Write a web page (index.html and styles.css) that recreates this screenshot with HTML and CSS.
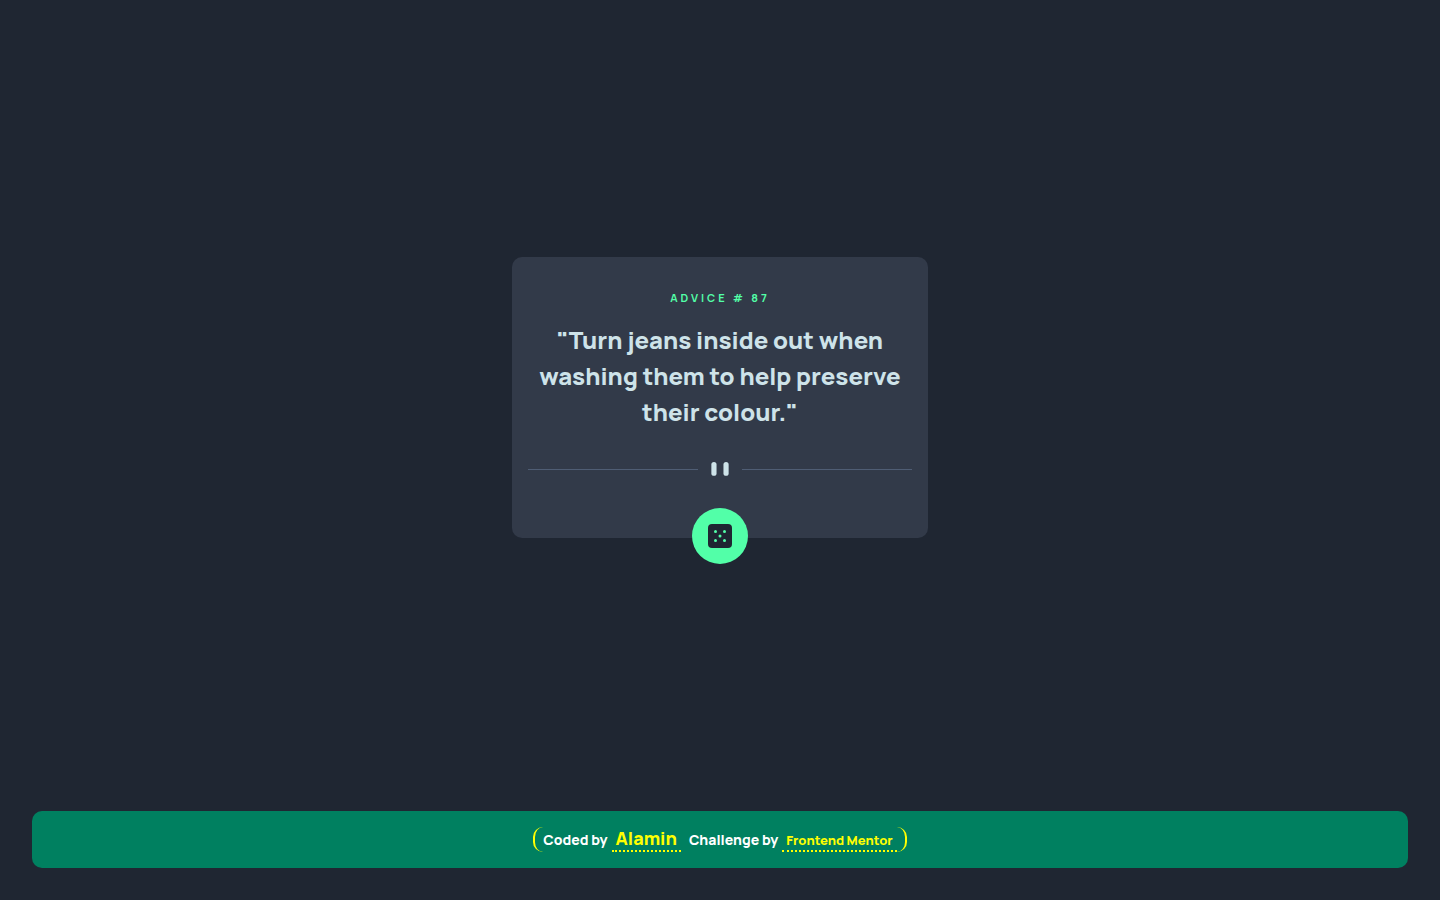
FILE: index.html
```html
<!DOCTYPE html>
<html lang="en">
<head>
<meta charset="utf-8">
<meta name="viewport" content="width=device-width, initial-scale=1">
<title>Advice generator</title>
<link rel="stylesheet" href="styles.css">
</head>
<body class="page">
<main class="main">
  <article class="card">
    <h1 class="card-label">Advice # 87</h1>
    <p class="card-quote">"Turn jeans inside out when washing them to help preserve their colour."</p>
    <svg class="divider" viewBox="0 0 444 16" aria-hidden="true">
      <path fill="#4f5d74" shape-rendering="crispEdges" d="M0 8h196v1H0zM248 8h196v1H248z"/>
      <g fill="#cee3e9"><rect x="212" width="6" height="16" rx="3"/><rect x="226" width="6" height="16" rx="3"/></g>
    </svg>
    <button class="dice" type="button" aria-label="New advice">
      <svg class="dice-icon" viewBox="0 0 24 24" aria-hidden="true">
        <rect width="24" height="24" rx="4" fill="#1f2632"/>
        <g fill="#52ffa8"><circle cx="7.500" cy="7.500" r="1.500"/><circle cx="16.500" cy="7.500" r="1.500"/><circle cx="12" cy="12" r="1.500"/><circle cx="7.500" cy="16.500" r="1.500"/><circle cx="16.500" cy="16.500" r="1.500"/></g>
      </svg>
    </button>
  </article>
</main>
<footer class="footer">
  <div class="credits">
    <p class="credit">Coded by <a class="link link-author" href="#">Alamin</a></p>
    <p class="credit">Challenge by <a class="link link-source" href="#">Frontend Mentor</a></p>
  </div>
</footer>
</body>
</html>
```
FILE: styles.css
```css
*,
*::before,
*::after {
  box-sizing: border-box;
}

.page {
  margin: 0;
  min-height: 100vh;
  display: flex;
  flex-direction: column;
  background: #1f2632;
  color: #cee3e9;
  font-family: Manrope, Inter, sans-serif;
  font-weight: 800;
}

.main {
  flex: 1;
  display: flex;
  align-items: center;
  justify-content: center;
  padding: 0 16px 16px;
}

.card {
  position: relative;
  display: flex;
  flex-direction: column;
  width: 100%;
  max-width: 416px;
  padding: 32px 16px 62px;
  border-radius: 10px;
  background: #323a49;
  text-align: center;
}

.card-label {
  margin: 0 0 16px;
  color: #52ffa8;
  font-size: 11px;
  line-height: 17px;
  letter-spacing: 3px;
  text-transform: uppercase;
}

.card-quote {
  margin: 0 0 32px;
  font-size: 24px;
  line-height: 36px;
}

.divider {
  display: block;
  width: 100%;
}

.dice {
  position: absolute;
  bottom: -26px;
  left: 50%;
  display: grid;
  place-items: center;
  width: 56px;
  height: 56px;
  margin-left: -28px;
  padding: 0;
  border: 0;
  border-radius: 50%;
  background: #52ffa8;
  cursor: pointer;
}

.dice-icon {
  width: 24px;
  height: 24px;
}

.footer {
  display: flex;
  justify-content: center;
  margin: 0 32px 32px;
  padding: 16px;
  border-radius: 10px;
  background: #008060;
  color: #fff;
}

.credits {
  display: flex;
  align-items: flex-end;
  gap: 8px;
  padding: 0 8px;
  border: solid #ff0;
  border-width: 0 2px;
  border-radius: 10px;
}

.credit {
  display: flex;
  align-items: baseline;
  gap: 4px;
  margin: 0;
  font-size: 14px;
  line-height: 20px;
}

.link {
  padding: 0 4px;
  border-bottom: 2px dotted #ff0;
  color: #ff0;
  text-decoration: none;
}

.link-author {
  font-size: 18px;
  line-height: 23px;
}

.link-source {
  font-size: 13px;
}
```
